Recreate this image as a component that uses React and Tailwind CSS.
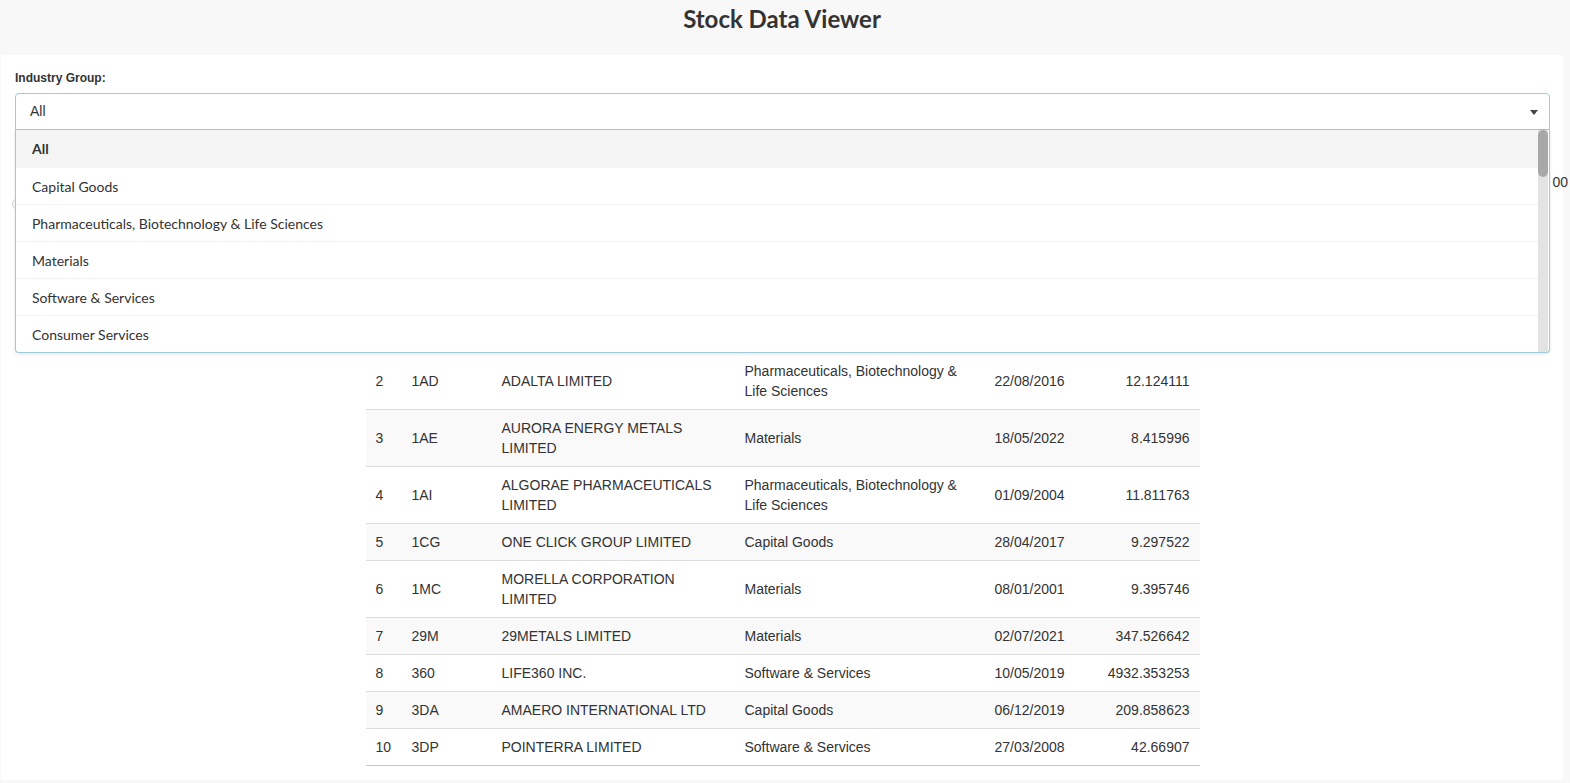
import React from "react";

const rows = [
  ["1", "14D", "1414 DEGREES LIMITED", "Capital Goods", "12/09/2018", "10.582916"],
  ["2", "1AD", "ADALTA LIMITED", "Pharmaceuticals, Biotechnology & Life Sciences", "22/08/2016", "12.124111"],
  ["3", "1AE", "AURORA ENERGY METALS LIMITED", "Materials", "18/05/2022", "8.415996"],
  ["4", "1AI", "ALGORAE PHARMACEUTICALS LIMITED", "Pharmaceuticals, Biotechnology & Life Sciences", "01/09/2004", "11.811763"],
  ["5", "1CG", "ONE CLICK GROUP LIMITED", "Capital Goods", "28/04/2017", "9.297522"],
  ["6", "1MC", "MORELLA CORPORATION LIMITED", "Materials", "08/01/2001", "9.395746"],
  ["7", "29M", "29METALS LIMITED", "Materials", "02/07/2021", "347.526642"],
  ["8", "360", "LIFE360 INC.", "Software & Services", "10/05/2019", "4932.353253"],
  ["9", "3DA", "AMAERO INTERNATIONAL LTD", "Capital Goods", "06/12/2019", "209.858623"],
  ["10", "3DP", "POINTERRA LIMITED", "Software & Services", "27/03/2008", "42.66907"],
];

const options = [
  "All",
  "Capital Goods",
  "Pharmaceuticals, Biotechnology & Life Sciences",
  "Materials",
  "Software & Services",
  "Consumer Services",
];

export default function App() {
  return (
    <div className="min-h-[783px] bg-[#f8f8f8] text-[#333]" style={{ fontFamily: "'Liberation Sans', Arial, sans-serif" }}>
      <div className="h-[55px] pt-[6px] flex justify-center">
        <h2 className="text-[24px] leading-[26px] font-bold text-[#333] pr-[6px]" style={{ fontFamily: "Lato, 'Liberation Sans', sans-serif" }}>
          Stock Data Viewer
        </h2>
      </div>
      <div className="ml-[1px] mr-[7px] bg-white rounded-[4px] pt-[15px] pl-[14px] pr-[13px] pb-[14px]">
        <div className="text-[12px] leading-[17px] font-bold mb-[6px]">Industry Group:</div>
        <div className="relative">
          <div className="h-[37px] border border-[#9fcad8] rounded-t-[4px] flex items-center justify-between pl-[14px] pr-[11px] text-[14px] bg-white">
            <span>All</span>
            <span className="w-0 h-0 border-l-[4px] border-r-[4px] border-t-[5px] border-l-transparent border-r-transparent border-t-[#444] mt-[1px]"></span>
          </div>
          {/* Dropdown menu overlay */}
          <div className="absolute left-0 right-0 top-[37px] z-20 bg-white border border-t-0 border-[#9fcad8] rounded-b-[4px] shadow-[0_1px_3px_rgba(0,0,0,0.12)] flex" style={{ fontFamily: "Lato, 'Liberation Sans', sans-serif" }}>
            <div className="flex-1">
              {options.map((o, i) => (
                <div
                  key={o}
                  className={
                    "h-[37px] flex items-center pl-[16px] text-[14px] " +
                    (i === 0 ? "bg-[#f5f5f5] font-bold" : "border-t border-[#f3f3f3]")
                  }
                >
                  {o}
                </div>
              ))}
            </div>
            <div className="w-[10px] mr-[1px] bg-[#e3e3e3] flex flex-col">
              <div className="h-[47px] rounded-[5px] bg-[#a8a8a8]"></div>
            </div>
          </div>
        </div>
        {/* Slider (mostly hidden under dropdown) */}
        <div className="relative h-[133px] mt-[15px]">
          <span className="absolute right-[-18px] top-[27px] text-[14px] text-[#333]">00</span>
          <div className="absolute left-[12px] right-[8px] top-[57px] h-[4px] bg-[#ededed] rounded"></div>
          <div className="absolute left-[-3px] top-[53px] w-[20px] h-[12px] rounded-full border border-[#d8d8d8] bg-white"></div>
        </div>
        <div className="flex justify-center">
          <table className="w-[834px] table-fixed border-collapse text-[14px] leading-[20px] text-[#333]">
            <colgroup>
              <col className="w-[36px]" />
              <col className="w-[90px]" />
              <col className="w-[243px]" />
              <col className="w-[250px]" />
              <col className="w-[100px]" />
              <col className="w-[115px]" />
            </colgroup>
            <thead>
              <tr className="border-b-2 border-[#ccc]">
                <th className="px-[10px] py-[8px] text-left"></th>
                <th className="px-[10px] py-[8px] text-left">Code</th>
                <th className="px-[10px] py-[8px] text-left">Company</th>
                <th className="px-[10px] py-[8px] text-left">Industry Group</th>
                <th className="px-[10px] py-[8px] text-left">Listed</th>
                <th className="px-[10px] py-[8px] text-right">Market Cap</th>
              </tr>
            </thead>
            <tbody>
              {rows.map((r, i) => (
                <tr
                  key={r[0]}
                  className={
                    (i % 2 === 0 ? "bg-[#f9f9f9] " : "bg-white ") +
                    (i === rows.length - 1 ? "border-b border-[#c4c4c4]" : "border-b border-[#dddddd]")
                  }
                >
                  <td className="px-[10px] py-[8px] align-middle">{r[0]}</td>
                  <td className="px-[10px] py-[8px] align-middle">{r[1]}</td>
                  <td className="px-[10px] py-[8px] align-middle">{r[2]}</td>
                  <td className="px-[10px] py-[8px] align-middle">{r[3]}</td>
                  <td className="px-[10px] py-[8px] align-middle">{r[4]}</td>
                  <td className="px-[10px] py-[8px] align-middle text-right">{r[5]}</td>
                </tr>
              ))}
            </tbody>
          </table>
        </div>
      </div>
    </div>
  );
}
